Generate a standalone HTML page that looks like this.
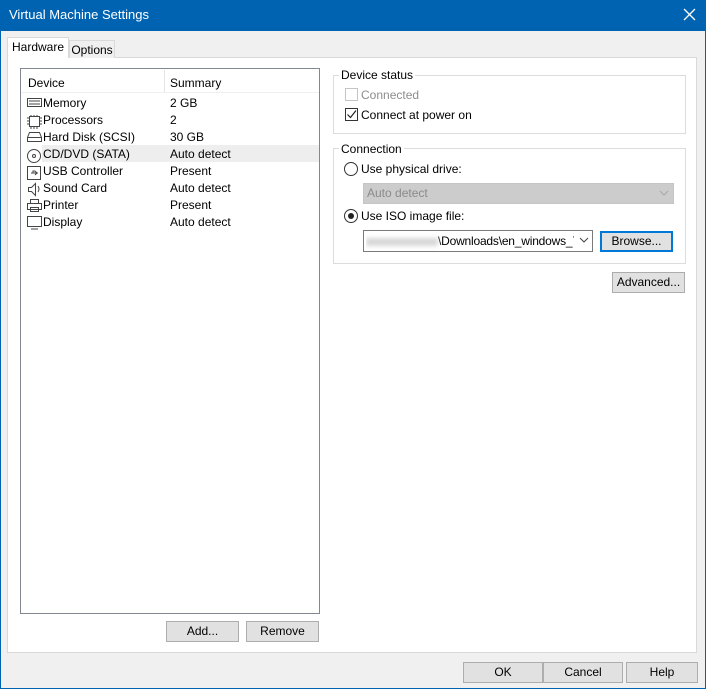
<!DOCTYPE html>
<html><head><style>
*{box-sizing:border-box;margin:0;padding:0}
body{width:706px;height:689px;background:#0063b1;font-family:"Liberation Sans",sans-serif;font-size:12px;color:#000;position:relative;overflow:hidden}
.a{position:absolute}
.win{left:1px;top:31px;width:704px;height:657px;background:#f0f0f0}
.btn{position:absolute;background:#e1e1e1;border:1px solid #adadad;text-align:center;line-height:18px;font-size:12px}
.grp{position:absolute;border:1px solid #dcdcdc}
.lbl{position:absolute;background:#fff;padding:0 2px;}
.row{position:absolute;left:0;height:17px;line-height:17px;width:298px}
.row span{position:absolute}
</style></head><body>
<div class="a" style="left:9px;top:7px;color:#fff;font-size:13px">Virtual Machine Settings</div>
<svg class="a" style="left:683px;top:8px" width="13" height="13"><path d="M1 1L12 12M12 1L1 12" stroke="#fff" stroke-width="1.3"/></svg>
<div class="a win"></div>
<div class="a" style="left:7px;top:57px;width:690px;height:596px;background:#fff;border:1px solid #d9d9d9"></div>
<div class="a" style="left:69px;top:40px;width:46px;height:18px;background:#f0f0f0;border:1px solid #d9d9d9;border-bottom:none;text-align:center;line-height:18px">Options</div>
<div class="a" style="left:7px;top:37px;width:62px;height:21px;background:#fff;border:1px solid #d9d9d9;border-bottom:none;text-align:center;line-height:19px">Hardware</div>
<div class="a" style="left:20px;top:68px;width:300px;height:546px;border:1px solid #828790;background:#fff">
 <div class="a" style="left:0;top:0;width:298px;height:24px;border-bottom:1px solid #f0f0f0"></div>
 <div class="a" style="left:143px;top:1px;width:1px;height:22px;background:#e5e5e5"></div>
 <div class="a" style="left:7px;top:7px">Device</div>
 <div class="a" style="left:149px;top:7px">Summary</div>
 <div class="a" style="left:21px;top:76px;width:277px;height:17px;background:#eeeeee"></div>
 <div class="row" style="top:26px"><span style="left:22px">Memory</span><span style="left:149px">2 GB</span></div>
 <div class="row" style="top:43px"><span style="left:22px">Processors</span><span style="left:149px">2</span></div>
 <div class="row" style="top:60px"><span style="left:22px">Hard Disk (SCSI)</span><span style="left:149px">30 GB</span></div>
 <div class="row" style="top:77px"><span style="left:22px">CD/DVD (SATA)</span><span style="left:149px">Auto detect</span></div>
 <div class="row" style="top:94px"><span style="left:22px">USB Controller</span><span style="left:149px">Present</span></div>
 <div class="row" style="top:111px"><span style="left:22px">Sound Card</span><span style="left:149px">Auto detect</span></div>
 <div class="row" style="top:128px"><span style="left:22px">Printer</span><span style="left:149px">Present</span></div>
 <div class="row" style="top:145px"><span style="left:22px">Display</span><span style="left:149px">Auto detect</span></div>
 <svg class="a" style="left:5px;top:28px" width="17" height="140" fill="none" stroke="#444" stroke-width="1">
  <rect x="1.5" y="1.5" width="14" height="8"/><path d="M3 4h11M3 7h11"/>
  <rect x="3.5" y="19.5" width="10" height="10"/><path d="M1 21h2M1 24h2M1 27h2M14 21h2M14 24h2M14 27h2M5 18v2M8 18v2M11 18v2M5 30v2M8 30v2M11 30v2"/>
  <path d="M1.5 44.5h14v-4l-2-5h-10l-2 5z M1.5 40.5h14"/>
  <circle cx="8" cy="59" r="6.5"/><circle cx="8" cy="59" r="1.5"/>
  <rect x="1.5" y="69.5" width="13" height="13"/><path d="M5 76h7M9 74l2 2-2 2M7 76v-2h2"/>
  <path d="M2.5 90.5h3l4-4v12l-4-4h-3z M12 89q2 3 0 6"/>
  <rect x="4.5" y="102.5" width="8" height="4"/><rect x="1.5" y="106.5" width="14" height="6"/><rect x="4.5" y="110.5" width="8" height="4"/>
  <rect x="1.5" y="119.5" width="14" height="10"/><path d="M5 132h7"/>
 </svg>
</div>
<div class="btn" style="left:166px;top:621px;width:73px;height:21px">Add...</div>
<div class="btn" style="left:246px;top:621px;width:73px;height:21px">Remove</div>
<div class="grp" style="left:333px;top:75px;width:353px;height:59px"></div>
<div class="lbl" style="left:339px;top:68px">Device status</div>
<div class="a" style="left:345px;top:88px;width:13px;height:13px;border:1px solid #c4c4c4"></div>
<div class="a" style="left:361px;top:88px;color:#8d8d8d">Connected</div>
<div class="a" style="left:345px;top:108px;width:13px;height:13px;border:1px solid #333"></div>
<svg class="a" style="left:346px;top:109px" width="11" height="11"><path d="M1.5 5.5l3 3 5.5-7" fill="none" stroke="#222" stroke-width="1.2"/></svg>
<div class="a" style="left:361px;top:108px">Connect at power on</div>
<div class="grp" style="left:333px;top:148px;width:353px;height:116px"></div>
<div class="lbl" style="left:339px;top:142px">Connection</div>
<div class="a" style="left:344px;top:162px;width:14px;height:14px;border:1px solid #333;border-radius:50%"></div>
<div class="a" style="left:361px;top:162px">Use physical drive:</div>
<div class="a" style="left:363px;top:183px;width:311px;height:21px;background:#cccccc;border:1px solid #c5c5c5;color:#8a8a8a;line-height:19px;padding-left:3px">Auto detect</div>
<svg class="a" style="left:659px;top:190px" width="10" height="7"><path d="M1 1l4 4 4-4" fill="none" stroke="#a8a8a8"/></svg>
<div class="a" style="left:344px;top:209px;width:14px;height:14px;border:1px solid #333;border-radius:50%"></div>
<div class="a" style="left:348px;top:213px;width:6px;height:6px;background:#222;border-radius:50%"></div>
<div class="a" style="left:361px;top:209px">Use ISO image file:</div>
<div class="a" style="left:363px;top:230px;width:230px;height:22px;border:1px solid #7a7a7a;background:#fff"></div>
<div class="a" style="left:366px;top:231px;width:208px;height:20px;line-height:20px;white-space:nowrap;overflow:hidden;letter-spacing:-0.2px"><span style="display:inline-block;width:72px;height:8px;background:#d8d8d8;filter:blur(2px);vertical-align:middle"></span>\Downloads\en_windows_7.</div>
<svg class="a" style="left:579px;top:237px" width="10" height="7"><path d="M1 1l4 4 4-4" fill="none" stroke="#444"/></svg>
<div class="btn" style="left:600px;top:231px;width:73px;height:21px;border:2px solid #0078d7;line-height:17px">Browse...</div>
<div class="btn" style="left:612px;top:272px;width:73px;height:21px">Advanced...</div>
<div class="btn" style="left:463px;top:662px;width:80px;height:21px">OK</div>
<div class="btn" style="left:543px;top:662px;width:80px;height:21px">Cancel</div>
<div class="btn" style="left:626px;top:662px;width:72px;height:21px">Help</div>
</body></html>
